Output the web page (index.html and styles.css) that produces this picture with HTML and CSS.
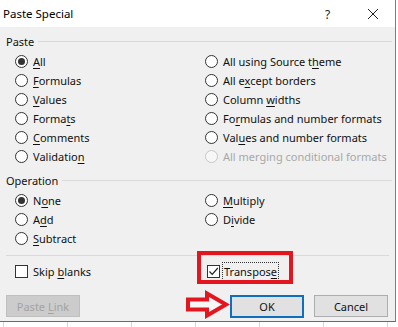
FILE: index.html
```html
<!DOCTYPE html>
<html lang="en">
<head>
    <meta charset="UTF-8">
    <meta name="viewport" content="width=device-width, initial-scale=1.0">
    <title>Paste Special</title>
    <link rel="stylesheet" href="styles.css">
</head>
<body>
    <div class="dialog">
        <div class="titlebar">
            <span class="title">Paste Special</span>
            <span class="help">?</span>
            <svg class="close" width="12" height="12" viewBox="0 0 12 12">
                <path d="M1 1 L11 11 M11 1 L1 11" stroke="#222" stroke-width="1" fill="none"/>
            </svg>
        </div>

        <div class="content">
            <div class="group-label"><span>Paste</span></div>
            <div class="options">
                <label class="radio checked"><span class="circle"></span><span><u>A</u>ll</span></label>
                <label class="radio"><span class="circle"></span><span>All using Source t<u>h</u>eme</span></label>
                <label class="radio"><span class="circle"></span><span><u>F</u>ormulas</span></label>
                <label class="radio"><span class="circle"></span><span>All e<u>x</u>cept borders</span></label>
                <label class="radio"><span class="circle"></span><span><u>V</u>alues</span></label>
                <label class="radio"><span class="circle"></span><span>Column <u>w</u>idths</span></label>
                <label class="radio"><span class="circle"></span><span>Forma<u>t</u>s</span></label>
                <label class="radio"><span class="circle"></span><span>Fo<u>r</u>mulas and number formats</span></label>
                <label class="radio"><span class="circle"></span><span><u>C</u>omments</span></label>
                <label class="radio"><span class="circle"></span><span>Val<u>u</u>es and number formats</span></label>
                <label class="radio"><span class="circle"></span><span>Validatio<u>n</u></span></label>
                <label class="radio disabled"><span class="circle"></span><span>All merging conditional formats</span></label>
            </div>

            <div class="group-label"><span>Operation</span></div>
            <div class="options">
                <label class="radio checked"><span class="circle"></span><span>N<u>o</u>ne</span></label>
                <label class="radio"><span class="circle"></span><span><u>M</u>ultiply</span></label>
                <label class="radio"><span class="circle"></span><span>A<u>d</u>d</span></label>
                <label class="radio"><span class="circle"></span><span>D<u>i</u>vide</span></label>
                <label class="radio"><span class="circle"></span><span><u>S</u>ubtract</span></label>
            </div>

            <div class="separator"></div>

            <div class="options checks">
                <label class="check"><span class="box"></span><span>Skip <u>b</u>lanks</span></label>
                <label class="check checked transpose">
                    <span class="box">
                        <svg width="11" height="11" viewBox="0 0 11 11">
                            <path d="M1.5 5.5 L4.2 8.3 L9.8 2" stroke="#222" stroke-width="1.2" fill="none"/>
                        </svg>
                    </span>
                    <span class="focus">Transpos<u>e</u></span>
                </label>
            </div>

            <div class="buttons">
                <button class="btn" disabled>Paste <u>L</u>ink</button>
                <button class="btn default">OK</button>
                <button class="btn">Cancel</button>
            </div>
        </div>

        <!-- annotations -->
        <div class="highlight"></div>
        <svg class="arrow" width="48" height="30" viewBox="0 0 48 30">
            <path d="M4 9.5 L23 9.5 L23 3.5 L42 14.5 L23 25.5 L23 19.5 L4 19.5 Z"
                  fill="#f6f6f6" stroke="#e3161f" stroke-width="4" stroke-linejoin="miter"/>
        </svg>
    </div>
    <div class="sheet-bottom"></div>
</body>
</html>
```

FILE: styles.css
```css
body {
    margin: 0;
    width: 398px;
    height: 327px;
    overflow: hidden;
    background: #fff;
    font-family: "Noto Sans", "Open Sans", sans-serif;
    font-size: 11px;
    color: #111;
}
.dialog {
    position: relative;
    width: 395px;
    height: 321px;
    background: #f0f0f0;
    border-right: 1px solid #7d7d7d;
    border-bottom: 1px solid #6a6a6a;
}
.titlebar {
    position: relative;
    height: 27px;
    background: #fff;
    display: flex;
    align-items: center;
}
.title {
    margin-left: 3px;
    font-size: 11.5px;
    color: #000;
}
.help {
    position: absolute;
    left: 325px;
    top: 6px;
    font-size: 12px;
    color: #222;
}
.close {
    position: absolute;
    left: 367px;
    top: 8px;
}
.content {
    padding: 0 3px 0 6px;
}
.group-label {
    display: flex;
    align-items: center;
    height: 16px;
    margin-top: 6px;
    color: #111;
}
.group-label::after {
    content: "";
    flex: 1;
    height: 1px;
    margin-left: 4px;
    background: #dadada;
}
.options {
    display: grid;
    grid-template-columns: 190px 1fr;
    padding-left: 9px;
    margin-top: 3px;
}
.radio, .check {
    display: flex;
    align-items: center;
    gap: 5px;
    height: 19px;
    white-space: nowrap;
}
.circle {
    position: relative;
    width: 13px;
    height: 13px;
    box-sizing: border-box;
    border: 1px solid #333;
    border-radius: 50%;
    background: #fff;
}
.radio.checked .circle::after {
    content: "";
    position: absolute;
    left: 2px;
    top: 2px;
    width: 7px;
    height: 7px;
    border-radius: 50%;
    background: #333;
}
.radio.disabled {
    color: #a8a8a8;
}
.radio.disabled .circle {
    border-color: #c6c6c6;
    background: #f7f7f7;
}
u {
    text-decoration-thickness: 1px;
    text-underline-offset: 2px;
}
.separator {
    height: 1px;
    margin: 7px 3px 0 0;
    background: #dadada;
}
.checks {
    margin-top: 6px;
}
.box {
    display: flex;
    align-items: center;
    justify-content: center;
    width: 13px;
    height: 13px;
    box-sizing: border-box;
    border: 1px solid #333;
    background: #fff;
}
.transpose {
    margin-left: 2px;
    gap: 3px;
}
.focus {
    padding: 1px 1px;
    outline: 1px dotted #333;
}
.buttons {
    display: flex;
    gap: 10px;
    margin-top: 14px;
    padding-right: 4px;
}
.btn {
    width: 74px;
    height: 22px;
    padding: 0;
    font-family: inherit;
    font-size: 11px;
    color: #111;
    background: #e1e1e1;
    border: 1px solid #adadad;
}
.btn:disabled {
    background: #cccccc;
    border-color: #bfbfbf;
    color: #a3a3a3;
}
.btn.default {
    margin-left: auto;
    height: 23px;
    border: 2px solid #0f6fbf;
}
.highlight {
    position: absolute;
    left: 197px;
    top: 251px;
    width: 88px;
    height: 25px;
    border: 4px solid #e3161f;
}
.arrow {
    position: absolute;
    left: 184px;
    top: 290px;
}
.sheet-bottom {
    height: 5px;
    background: repeating-linear-gradient(90deg, transparent 0 3px, #d4d4d4 3px 4px, transparent 4px 64px);
}
```
